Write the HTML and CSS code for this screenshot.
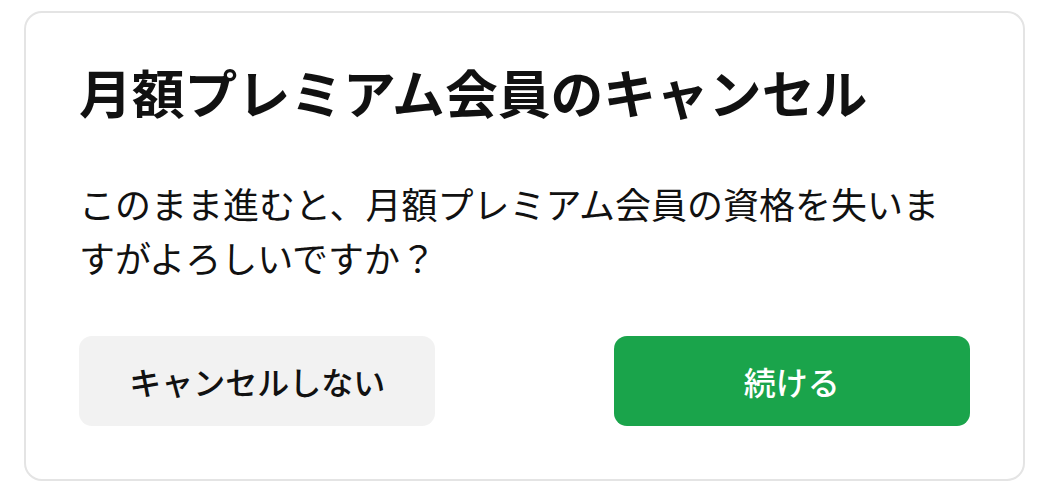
FILE: index.html
```html
<!DOCTYPE html>
<html lang="ja">
<head>
<meta charset="utf-8">
<link rel="stylesheet" href="styles.css">
</head>
<body>
<div class="dialog">
  <h1 class="dialog-title">月額プレミアム会員のキャンセル</h1>
  <p class="dialog-text">このまま進むと、月額プレミアム会員の資格を失いますがよろしいですか？</p>
  <div class="dialog-actions">
    <button class="btn btn-secondary">キャンセルしない</button>
    <button class="btn btn-primary">続ける</button>
  </div>
</div>
</body>
</html>
```
FILE: styles.css
```css
html, body {
  margin: 0;
  padding: 0;
  background: #ffffff;
}
body {
  padding: 11px 0 0 24px;
  font-family: "Noto Sans CJK JP", "Noto Sans", sans-serif;
  color: #111111;
}
.dialog {
  box-sizing: border-box;
  width: 1001px;
  height: 470px;
  border: 2px solid #e4e4e4;
  border-radius: 18px;
  padding: 39px 53px 53px 53px;
  display: flex;
  flex-direction: column;
}
.dialog-title {
  margin: 0;
  font-size: 52.8px;
  font-weight: 700;
  line-height: 1.5;
  letter-spacing: 0;
}
.dialog-text {
  margin: 45px 0 0 0;
  font-size: 36px;
  font-weight: 400;
  line-height: 54px;
}
.dialog-actions {
  margin-top: auto;
  display: flex;
  justify-content: space-between;
}
.btn {
  width: 40%;
  height: 90px;
  border: none;
  border-radius: 13px;
  font-family: inherit;
  font-size: 32px;
  font-weight: 500;
  cursor: pointer;
}
.btn-secondary {
  background: #f2f2f2;
  color: #111111;
}
.btn-primary {
  background: #1aa44b;
  color: #ffffff;
}
```
